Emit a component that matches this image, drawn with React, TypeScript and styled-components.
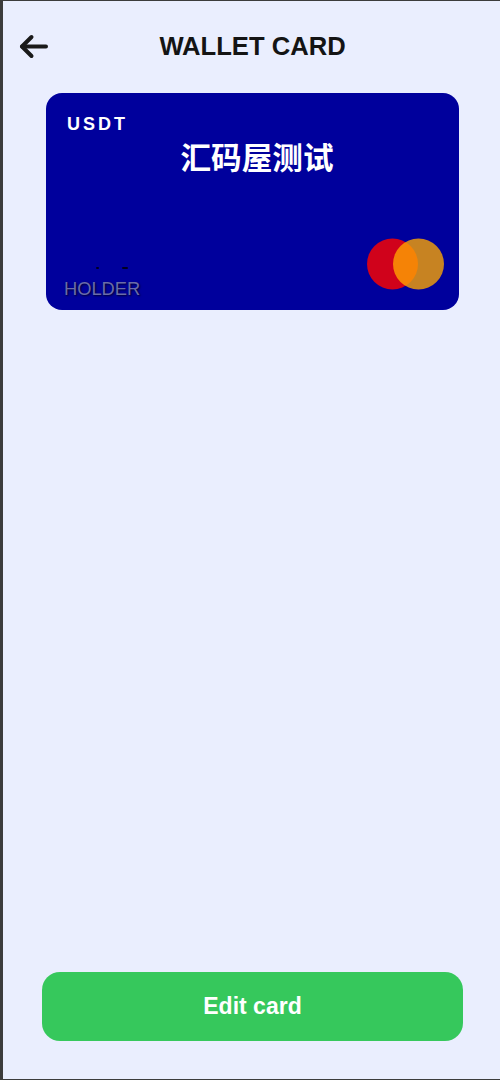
import React from "react";
import styled, { createGlobalStyle } from "styled-components";

const Global = createGlobalStyle`
  html, body { margin: 0; padding: 0; }
  body { font-family: "Liberation Sans", Arial, "Noto Sans CJK SC", sans-serif; }
  * { box-sizing: border-box; }
`;

const Page = styled.div`
  width: 500px;
  height: 1080px;
  display: flex;
  flex-direction: column;
  background: #eaeefe;
  border-left: 3px solid #3c3c3c;
  border-top: 1px solid #3c3c3c;
  border-bottom: 1px solid #3c3c3c;
`;

const Header = styled.header`
  height: 92px;
  flex: none;
  position: relative;
  display: flex;
  justify-content: center;
  padding-top: 30px;
`;

const BackButton = styled.button`
  position: absolute;
  left: 14px;
  top: 30px;
  width: 34px;
  height: 30px;
  padding: 0;
  border: 0;
  background: none;
  color: #1a1a1a;
`;

const Title = styled.h1`
  margin: 0 0 0 2px;
  font-size: 25.6px;
  line-height: 30px;
  font-weight: 700;
  color: #141414;
`;

const Card = styled.section`
  width: 413px;
  height: 217px;
  margin-left: 43px;
  flex: none;
  border-radius: 16px;
  background: #00009c;
  padding: 21px 15px 9px 19px;
  display: flex;
  flex-direction: column;
`;

const Currency = styled.div`
  font-size: 18px;
  line-height: 21px;
  font-weight: 700;
  letter-spacing: 3px;
  color: #fff;
  margin-left: 2px;
`;

const CardName = styled.div`
  margin: 3px 0 0 5px;
  font-size: 30.6px;
  line-height: 40px;
  font-weight: 700;
  text-align: center;
  color: #fff;
  font-family: "Liberation Sans", "Noto Sans CJK SC", sans-serif;
`;

const CardBottom = styled.div`
  margin-top: auto;
  display: flex;
  justify-content: space-between;
  align-items: flex-end;
`;

const HolderBlock = styled.div`
  display: flex;
  flex-direction: column;
`;

const NumberDots = styled.div`
  display: flex;
  align-items: center;
  gap: 23px;
  margin-left: 31px;
  margin-bottom: 9px;
`;

const Dot = styled.span<{ $wide?: boolean }>`
  width: ${(p) => (p.$wide ? 6 : 3)}px;
  height: 2px;
  border-radius: 1px;
  background: #000020;
`;

const Holder = styled.div`
  margin: 0 0 1px -1px;
  font-size: 18.3px;
  line-height: 22px;
  color: #6a6ca8;
  text-shadow: 1px 1px 2px #000030;
`;

const Logo = styled.svg`
  display: block;
  width: 77px;
  height: 52px;
  margin-bottom: 11px;
`;

const Spacer = styled.div`
  flex: 1;
`;

const EditButton = styled.button`
  width: 421px;
  height: 69px;
  margin: 0 0 38px 39px;
  flex: none;
  border: 0;
  border-radius: 18px;
  background: #36c85c;
  color: #fff;
  font-family: inherit;
  font-size: 23px;
  font-weight: 700;
`;

export default function App() {
  return (
    <Page>
      <Global />
      <Header>
        <BackButton aria-label="Back">
          <svg width="34" height="30" viewBox="0 0 34 30" fill="none" stroke="currentColor" strokeWidth="4" strokeLinecap="round" strokeLinejoin="round">
            <path d="M5 15.500H29" />
            <path d="M14.500 6L5 15.500L14.500 25" />
          </svg>
        </BackButton>
        <Title>WALLET CARD</Title>
      </Header>
      <Card>
        <Currency>USDT</Currency>
        <CardName>汇码屋测试</CardName>
        <CardBottom>
          <HolderBlock>
            <NumberDots>
              <Dot />
              <Dot $wide />
            </NumberDots>
            <Holder>HOLDER</Holder>
          </HolderBlock>
          <Logo viewBox="0 0 77 52">
            <circle cx="25.500" cy="26" r="25.500" fill="#d0021b" />
            <circle cx="51.500" cy="26" r="25.500" fill="#ffa800" fillOpacity="0.78" />
          </Logo>
        </CardBottom>
      </Card>
      <Spacer />
      <EditButton>Edit card</EditButton>
    </Page>
  );
}
